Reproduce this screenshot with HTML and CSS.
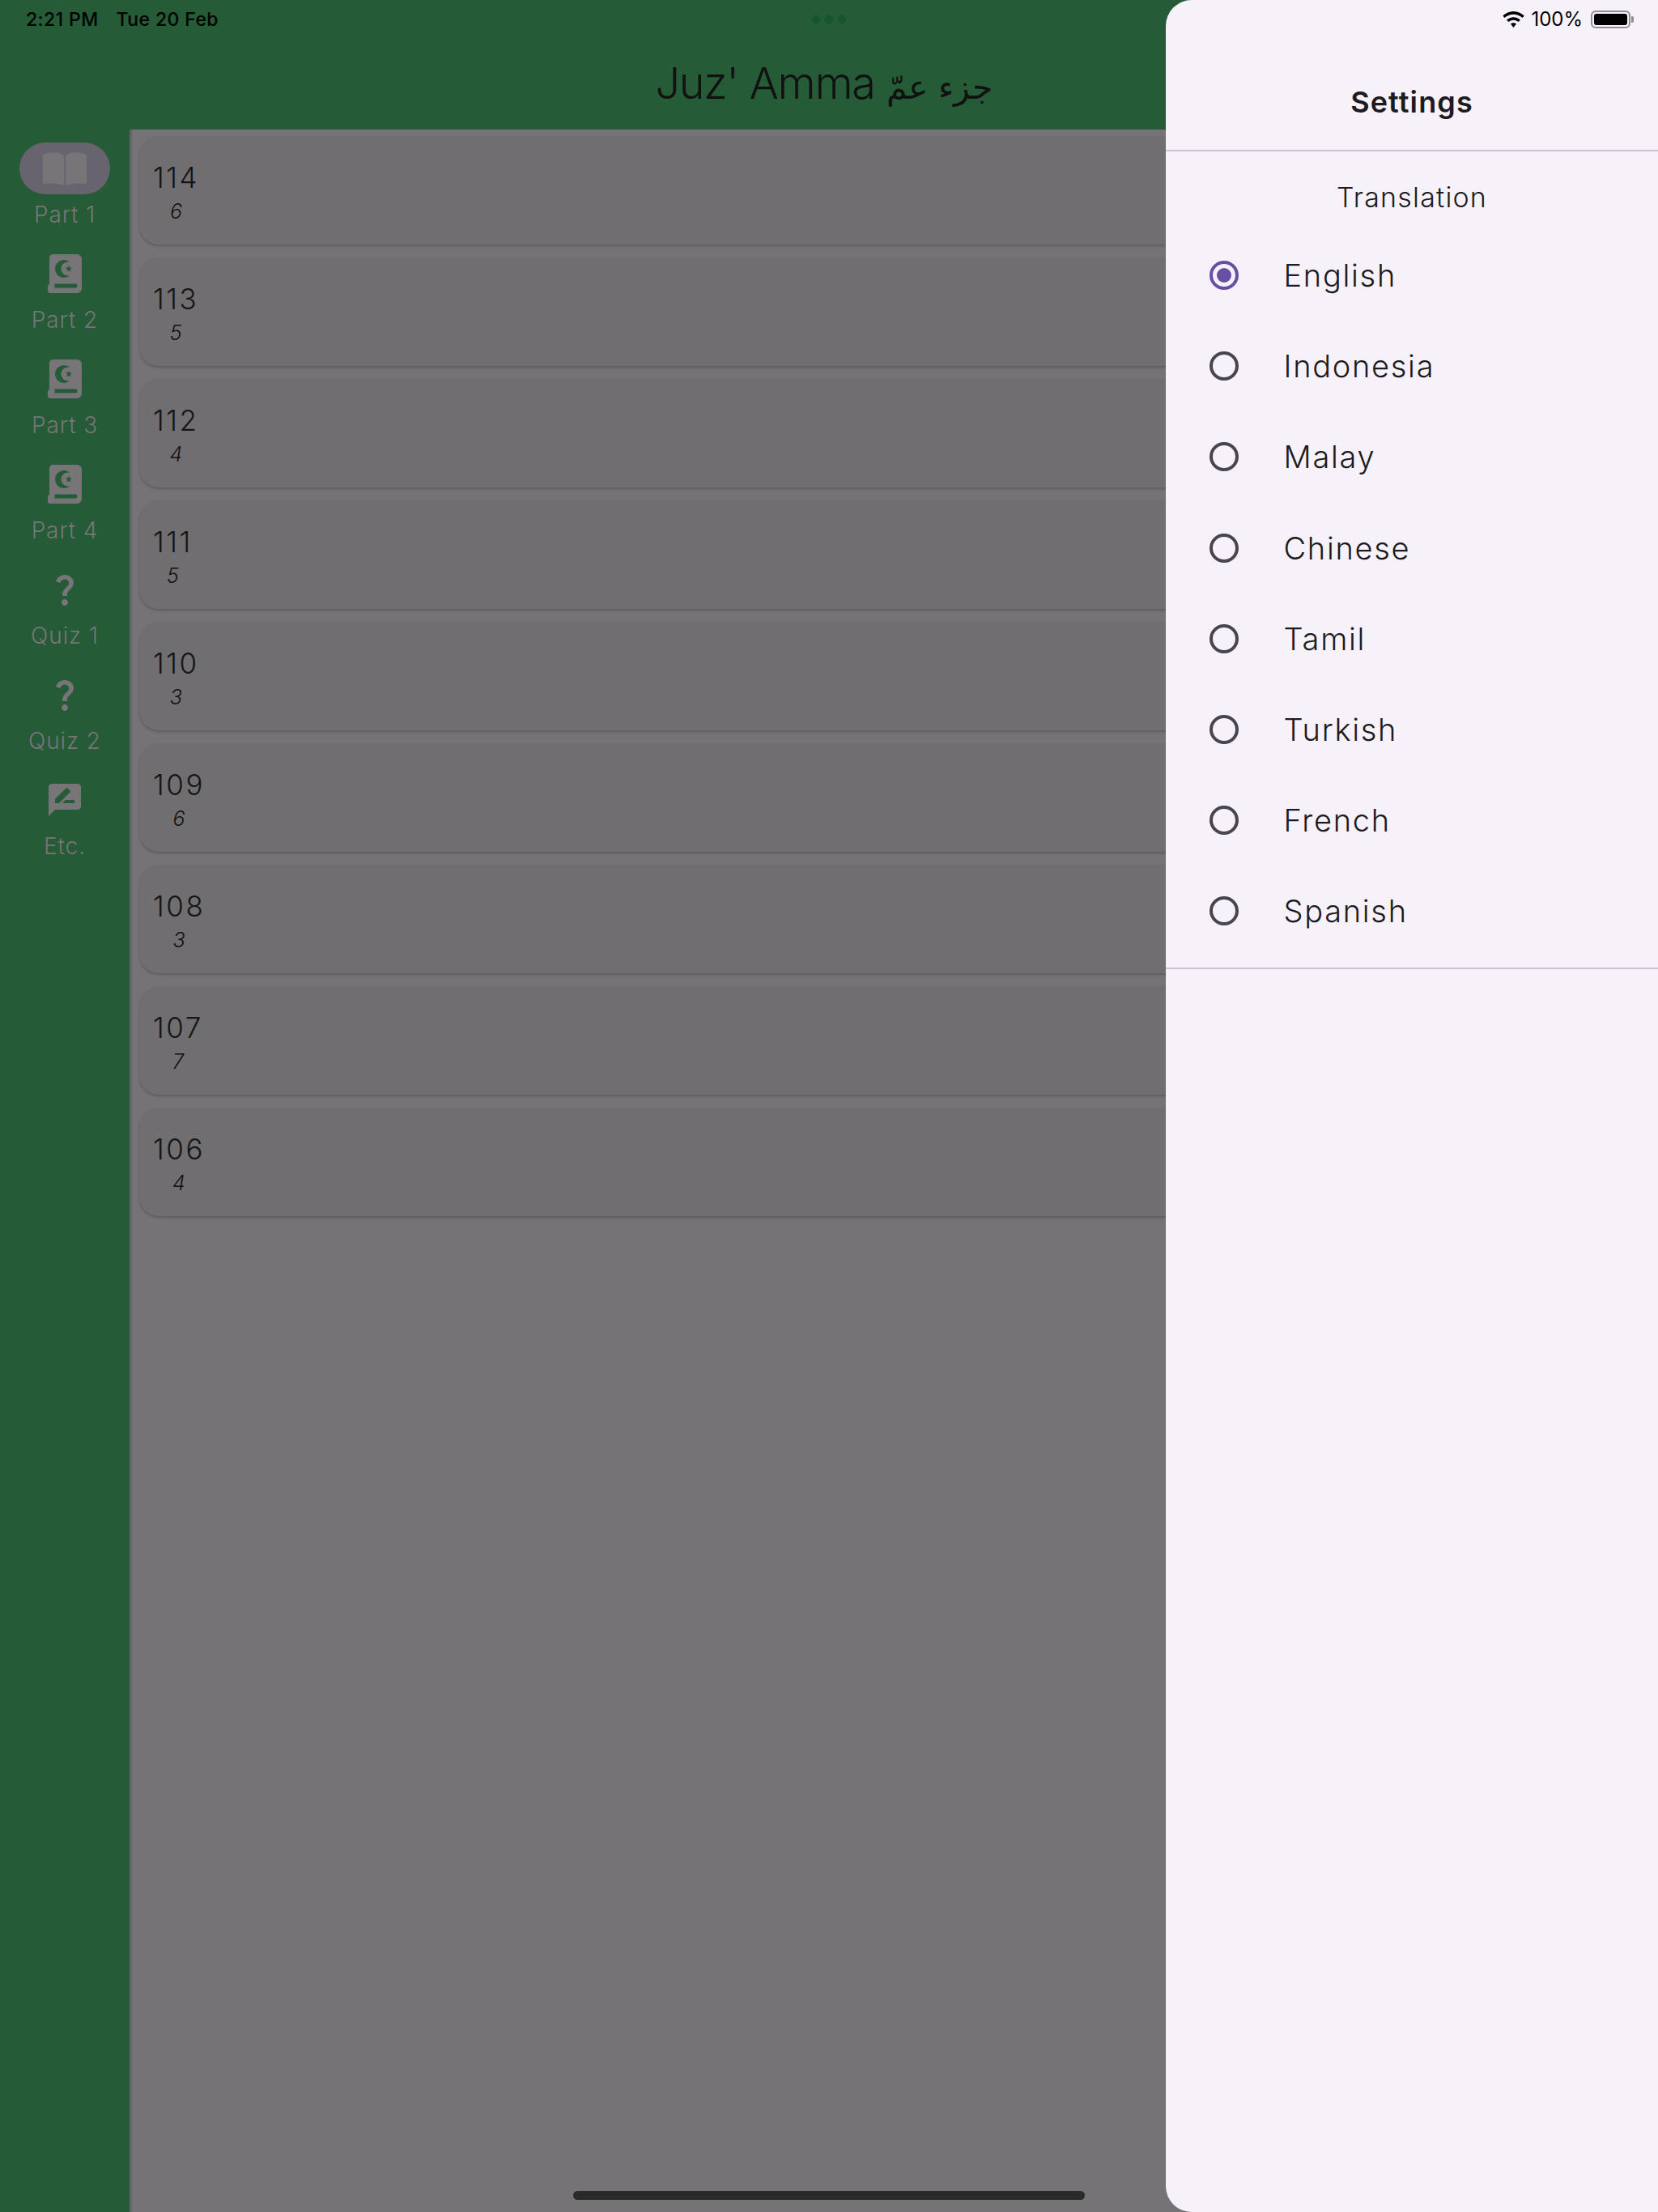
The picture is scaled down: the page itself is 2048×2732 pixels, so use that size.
FILE: index.html
```html
<!DOCTYPE html>
<html lang="en">
<head>
    <meta charset="UTF-8">
    <title>Juz' Amma</title>
    <meta name="viewport" content="width=device-width, initial-scale=1.0">
    <link rel="stylesheet" href="styles.css">
</head>
<body>
    <svg class="defs" width="0" height="0">
        <symbol id="quran" viewBox="0 0 42 48">
            <path fill-rule="evenodd" d="M6 0H36a6 6 0 0 1 6 6V42a6 6 0 0 1-6 6H3a3 3 0 0 1-3-3V40a3 3 0 0 1 2-3V5a5 5 0 0 1 4-5zM27.380 9.840A11 11 0 1 0 27.380 26.160A8.500 8.500 0 1 1 27.380 9.840zM26 13.500L27.100 16.500L30.300 16.600L27.800 18.600L28.600 21.600L26 19.900L23.400 21.600L24.200 18.600L21.700 16.600L24.900 16.500zM8.500 36.500V41.500H34a2.500 2.500 0 0 0 0-5z"/>
        </symbol>
        <symbol id="question" viewBox="0 0 24 24">
            <path d="M11.07 12.85c.77-1.39 2.25-2.21 3.11-3.44.91-1.29.4-3.7-2.18-3.7-1.69 0-2.52 1.28-2.87 2.34L6.54 6.96C7.25 4.83 9.18 3 11.99 3c2.35 0 3.96 1.07 4.78 2.41.7 1.15 1.11 3.3.03 4.9-1.2 1.77-2.35 2.31-2.97 3.45-.25.46-.35.76-.35 2.24h-2.89c-.01-.78-.13-2.05.48-3.15zM14 20c0 1.1-.9 2-2 2s-2-.9-2-2 .9-2 2-2 2 .9 2 2z"/>
        </symbol>
    </svg>

    <div class="status-bar">
        <div class="status-time"><span>2:21 PM</span><span>Tue 20 Feb</span></div>
        <div class="status-dots"><i></i><i></i><i></i></div>
        <div class="status-right">
            <svg class="wifi" viewBox="1.9 1 23.2 17.5"><path d="M13.5 4.2c3.7 0 7 1.4 9.6 3.8l2-2.1C21.9 2.800 17.900 1 13.500 1S5.100 2.800 1.900 5.900l2 2.100c2.600-2.400 5.900-3.800 9.600-3.800zM13.500 10.300c2 0 3.900.8 5.300 2.100l2.100-2.100c-2-1.900-4.500-3-7.400-3s-5.400 1.100-7.400 3l2.100 2.100c1.400-1.300 3.300-2.100 5.300-2.100zM13.500 13.400c-1.200 0-2.300.5-3.100 1.200l3.100 3.900 3.100-3.900c-.8-.7-1.900-1.200-3.100-1.200z"/></svg>
            <span>100%</span>
            <div class="battery"><div class="battery-level"></div></div>
            <div class="battery-tip"></div>
        </div>
    </div>

    <header class="app-bar">
        <h1>Juz' Amma <span lang="ar" dir="rtl">جزء عمّ</span></h1>
    </header>

    <div class="main">
        <nav class="rail">
            <a class="rail-item">
                <span class="rail-pill">
                    <svg class="book-open" viewBox="0 0 54 41"><path d="M0 6Q0 2 4 1.500Q14-1 22 1.500Q26 3 26 7V41Q14 37 0 39.500zM54 6Q54 2 50 1.500Q40-1 32 1.500Q28 3 28 7V41Q40 37 54 39.500z"/></svg>
                </span>
                <span class="rail-label">Part 1</span>
            </a>
            <a class="rail-item">
                <span class="rail-pill"><svg class="quran"><use href="#quran"/></svg></span>
                <span class="rail-label">Part 2</span>
            </a>
            <a class="rail-item">
                <span class="rail-pill"><svg class="quran"><use href="#quran"/></svg></span>
                <span class="rail-label">Part 3</span>
            </a>
            <a class="rail-item">
                <span class="rail-pill"><svg class="quran"><use href="#quran"/></svg></span>
                <span class="rail-label">Part 4</span>
            </a>
            <a class="rail-item">
                <span class="rail-pill"><svg class="icon-48"><use href="#question"/></svg></span>
                <span class="rail-label">Quiz 1</span>
            </a>
            <a class="rail-item">
                <span class="rail-pill"><svg class="icon-48"><use href="#question"/></svg></span>
                <span class="rail-label">Quiz 2</span>
            </a>
            <a class="rail-item">
                <span class="rail-pill">
                    <svg class="icon-48" viewBox="0 0 24 24"><path d="M20 2H4c-1.100 0-1.990.9-1.990 2L2 22l4-4h14c1.100 0 2-.9 2-2V4c0-1.100-.9-2-2-2zM6 14v-2.470l6.880-6.880c.2-.2.510-.2.710 0l1.770 1.770c.2.2.2.510 0 .710L8.470 14H6zm12 0h-7.500l2-2H18v2z"/></svg>
                </span>
                <span class="rail-label">Etc.</span>
            </a>
        </nav>

        <section class="surah-list">
            <div class="surah-card"><div class="surah-num"><span>114</span><em>6</em></div></div>
            <div class="surah-card"><div class="surah-num"><span>113</span><em>5</em></div></div>
            <div class="surah-card"><div class="surah-num"><span>112</span><em>4</em></div></div>
            <div class="surah-card"><div class="surah-num"><span>111</span><em>5</em></div></div>
            <div class="surah-card"><div class="surah-num"><span>110</span><em>3</em></div></div>
            <div class="surah-card"><div class="surah-num"><span>109</span><em>6</em></div></div>
            <div class="surah-card"><div class="surah-num"><span>108</span><em>3</em></div></div>
            <div class="surah-card"><div class="surah-num"><span>107</span><em>7</em></div></div>
            <div class="surah-card"><div class="surah-num"><span>106</span><em>4</em></div></div>
        </section>
    </div>

    <aside class="drawer">
        <h2>Settings</h2>
        <div class="drawer-section">
            <h3>Translation</h3>
            <label class="radio-row"><span class="radio checked"></span>English</label>
            <label class="radio-row"><span class="radio"></span>Indonesia</label>
            <label class="radio-row"><span class="radio"></span>Malay</label>
            <label class="radio-row"><span class="radio"></span>Chinese</label>
            <label class="radio-row"><span class="radio"></span>Tamil</label>
            <label class="radio-row"><span class="radio"></span>Turkish</label>
            <label class="radio-row"><span class="radio"></span>French</label>
            <label class="radio-row"><span class="radio"></span>Spanish</label>
        </div>
    </aside>

    <div class="home-indicator"></div>
</body>
</html>
```
FILE: styles.css
```css
* {
    box-sizing: border-box;
}

html, body {
    height: 100%;
    overflow: hidden;
}

body {
    margin: 0;
    width: 2048px;
    height: 2732px;
    position: relative;
    display: flex;
    flex-direction: column;
    background-color: #255b37;
    color: #111;
    font-family: Inter, "Liberation Sans", sans-serif;
}

.defs {
    display: block;
}

/* status bar lies over the drawer */
.status-bar {
    position: absolute;
    top: 0;
    left: 0;
    right: 0;
    z-index: 3;
    height: 47px;
    padding: 0 30px 0 32px;
    display: flex;
    align-items: center;
    justify-content: space-between;
    font-size: 23px;
    font-weight: 500;
    color: #000;
}

.status-time {
    display: flex;
    gap: 22px;
    letter-spacing: 0.4px;
}

.status-dots {
    position: absolute;
    left: 1003px;
    top: 19px;
    display: flex;
    gap: 6px;
}

.status-dots i {
    width: 10px;
    height: 10px;
    border-radius: 50%;
    background-color: #14562d;
}

.status-right {
    display: flex;
    align-items: center;
    font-size: 24px;
    font-weight: 400;
}

.wifi {
    width: 27px;
    height: 20px;
    margin-right: 8px;
}

.battery {
    width: 49px;
    height: 22px;
    margin-left: 10px;
    padding: 2px;
    border: 2px solid #8e8e90;
    border-radius: 6px;
}

.battery-level {
    height: 100%;
    background-color: #000;
    border-radius: 3px;
}

.battery-tip {
    width: 3px;
    height: 8px;
    margin-left: 1px;
    background-color: #8e8e90;
    border-radius: 0 2px 2px 0;
}

.app-bar {
    height: 160px;
    flex: none;
    padding: 70px 13px 0 0;
    display: flex;
    justify-content: center;
}

.app-bar h1 {
    margin: 0;
    font-size: 54px;
    font-weight: 300;
    line-height: 66px;
    letter-spacing: -1.3px;
    white-space: nowrap;
}

.app-bar h1 span {
    font-family: "DejaVu Sans", sans-serif;
    font-size: 41px;
    letter-spacing: 0;
}

.main {
    flex: 1;
    display: flex;
    min-height: 0;
}

.rail {
    width: 163px;
    flex: none;
    padding-top: 16px;
    border-right: 3px solid #606462;
    display: flex;
    flex-direction: column;
    align-items: center;
}

.rail-item {
    height: 130px;
    width: 160px;
    display: flex;
    flex-direction: column;
    align-items: center;
    fill: #777577;
    color: #777577;
}

.rail-pill {
    width: 112px;
    height: 64px;
    flex: none;
    border-radius: 32px;
    display: flex;
    align-items: center;
    justify-content: center;
}

.rail-item:first-child .rail-pill {
    background-color: #676470;
}

.book-open {
    width: 54px;
    height: 41px;
}

.quran {
    width: 42px;
    height: 48px;
}

.icon-48 {
    width: 48px;
    height: 48px;
}

.rail-label {
    margin-top: 9px;
    font-size: 28px;
    font-weight: 300;
    line-height: 32px;
    letter-spacing: 0.9px;
}

.surah-list {
    flex: 1;
    padding: 8px 8px 0 9px;
    background-color: #767376;
}

.surah-card {
    height: 134px;
    margin-bottom: 16px;
    padding: 29px 0 0 17px;
    background-color: #706e71;
    border-radius: 24px;
    box-shadow: 0 2px 3px rgba(0, 0, 0, 0.2);
}

.surah-num {
    display: inline-flex;
    flex-direction: column;
    align-items: center;
    color: #161616;
}

.surah-num span {
    font-size: 35px;
    font-weight: 350;
    line-height: 44px;
    letter-spacing: 2.500px;
}

.surah-num em {
    margin-top: 5px;
    font-size: 25px;
    font-weight: 300;
    line-height: 30px;
    color: #111;
}

/* modal settings drawer, over the page */
.drawer {
    position: absolute;
    top: 0;
    right: 0;
    bottom: 0;
    z-index: 2;
    width: 608px;
    background-color: #f7f2fa;
    border-radius: 32px 0 0 32px;
    color: #1d1b20;
}

.drawer h2 {
    margin: 0;
    height: 187px;
    padding-top: 103px;
    border-bottom: 2px solid #cac4d0;
    font-size: 36px;
    font-weight: 600;
    line-height: 46px;
    text-align: center;
    letter-spacing: 1.100px;
}

.drawer-section {
    height: 1010px;
    border-bottom: 2px solid #cac4d0;
}

.drawer h3 {
    margin: 0;
    padding-top: 37px;
    font-size: 34px;
    font-weight: 300;
    line-height: 40px;
    text-align: center;
    letter-spacing: 1.200px;
}

.radio-row {
    height: 112.200px;
    padding-left: 54px;
    display: flex;
    align-items: center;
    gap: 55.500px;
    font-size: 38px;
    font-weight: 300;
    letter-spacing: 1.700px;
}

.drawer h3 + .radio-row {
    margin-top: 20px;
}

.radio {
    width: 36px;
    height: 36px;
    flex: none;
    border: 4px solid #49454f;
    border-radius: 50%;
}

.radio.checked {
    border-color: #6750a4;
    padding: 5px;
    background-color: #6750a4;
    background-clip: content-box;
}

.home-indicator {
    position: absolute;
    left: 708px;
    bottom: 15px;
    z-index: 1;
    width: 632px;
    height: 11px;
    background-color: #2a2a2a;
    border-radius: 6px;
}
```
